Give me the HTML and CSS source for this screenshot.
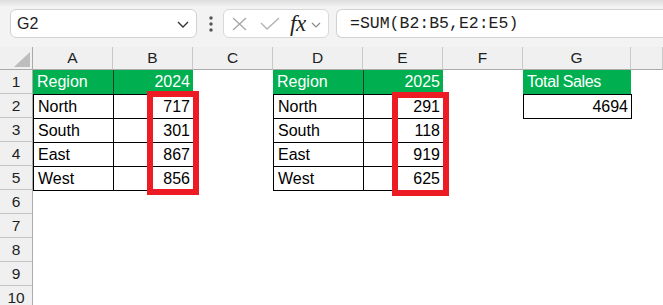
FILE: index.html
```html
<!DOCTYPE html>
<html lang="en">
<head>
    <meta charset="UTF-8">
    <meta name="viewport" content="width=device-width, initial-scale=1.0">
    <title>Total Sales</title>
    <link rel="stylesheet" href="styles.css">
</head>
<body>
    <div class="toolbar">
        <div class="namebox">
            <span>G2</span>
            <svg class="chev" width="12" height="7" viewBox="0 0 12 7"><path d="M1 1 L6 6 L11 1" fill="none" stroke="#333" stroke-width="1.4"/></svg>
        </div>
        <svg class="grip" width="6" height="16" viewBox="0 0 6 16">
            <circle cx="3" cy="2" r="1.7" fill="#555"/>
            <circle cx="3" cy="8" r="1.7" fill="#555"/>
            <circle cx="3" cy="14" r="1.7" fill="#555"/>
        </svg>
        <div class="fxbox">
            <svg class="cancel" width="15" height="14" viewBox="0 0 15 14"><path d="M1 1 L14 13 M14 1 L1 13" fill="none" stroke="#a6a6a6" stroke-width="1.3"/></svg>
            <svg class="enter" width="20" height="13" viewBox="0 0 20 13"><path d="M1 6 L7 12 L19 1" fill="none" stroke="#b2b2b2" stroke-width="1.3"/></svg>
            <span class="fx">fx</span>
            <svg class="chev-sm" width="10" height="6" viewBox="0 0 10 6"><path d="M1 1 L5 5 L9 1" fill="none" stroke="#8a8a8a" stroke-width="1.2"/></svg>
        </div>
        <div class="formula">=SUM(B2:B5,E2:E5)</div>
    </div>

    <div class="sheet">
        <div class="row colhead">
            <div class="corner"><svg width="16" height="15" viewBox="0 0 16 15"><path d="M16 0 L16 15 L0 15 Z" fill="#bdbdbd"/></svg></div>
            <div>A</div><div>B</div><div>C</div><div>D</div><div>E</div><div>F</div><div>G</div><div></div>
        </div>

        <div class="row">
            <div class="num">1</div>
            <div class="cell head first">Region</div>
            <div class="cell head right">2024</div>
            <div class="cell"></div>
            <div class="cell head first">Region</div>
            <div class="cell head right">2025</div>
            <div class="cell"></div>
            <div class="cell head first narrow">Total Sales</div>
            <div class="cell"></div>
        </div>
        <div class="row">
            <div class="num">2</div>
            <div class="cell t first">North</div>
            <div class="cell t last right">717</div>
            <div class="cell"></div>
            <div class="cell t first">North</div>
            <div class="cell t last right">291</div>
            <div class="cell"></div>
            <div class="cell t first last bottom right">4694</div>
            <div class="cell"></div>
        </div>
        <div class="row">
            <div class="num">3</div>
            <div class="cell t first">South</div>
            <div class="cell t last right">301</div>
            <div class="cell"></div>
            <div class="cell t first">South</div>
            <div class="cell t last right">118</div>
            <div class="cell"></div><div class="cell"></div><div class="cell"></div>
        </div>
        <div class="row">
            <div class="num">4</div>
            <div class="cell t first">East</div>
            <div class="cell t last right">867</div>
            <div class="cell"></div>
            <div class="cell t first">East</div>
            <div class="cell t last right">919</div>
            <div class="cell"></div><div class="cell"></div><div class="cell"></div>
        </div>
        <div class="row">
            <div class="num">5</div>
            <div class="cell t first bottom">West</div>
            <div class="cell t last bottom right">856</div>
            <div class="cell"></div>
            <div class="cell t first bottom">West</div>
            <div class="cell t last bottom right">625</div>
            <div class="cell"></div><div class="cell"></div><div class="cell"></div>
        </div>
        <div class="row"><div class="num">6</div></div>
        <div class="row"><div class="num">7</div></div>
        <div class="row"><div class="num">8</div></div>
        <div class="row"><div class="num">9</div></div>
        <div class="row"><div class="num">10</div></div>

        <!-- highlight boxes drawn over the sheet -->
        <div class="mark mark-b"></div>
        <div class="mark mark-e"></div>
    </div>
</body>
</html>
```

FILE: styles.css
```css
body {
    margin: 0;
    font-family: "Liberation Sans", Arial, sans-serif;
    background-color: #ffffff;
    overflow: hidden;
}
.toolbar {
    height: 47px;
    box-sizing: border-box;
    padding: 9px 0 0 10px;
    display: flex;
    align-items: flex-start;
    background: linear-gradient(#dedede, #f3f3f3 7px);
}
.namebox {
    width: 187px;
    height: 29px;
    box-sizing: border-box;
    background-color: white;
    border: 1px solid #d2d2d2;
    border-radius: 6px;
    display: flex;
    align-items: center;
    justify-content: space-between;
    padding: 0 7px 0 6px;
    font-size: 16px;
    color: #1e1e1e;
}
.namebox .chev {
    margin-top: 1px;
}
.grip {
    margin: 7px 0 0 11px;
}
.fxbox {
    width: 106px;
    height: 29px;
    box-sizing: border-box;
    margin-left: 9px;
    background-color: white;
    border: 1px solid #d8d8d8;
    border-radius: 6px;
    display: flex;
    align-items: center;
    padding-left: 8px;
}
.enter {
    margin-left: 13px;
}
.fx {
    margin-left: 10px;
    font-family: "Liberation Serif", "Times New Roman", serif;
    font-style: italic;
    font-size: 23px;
    color: #222;
    line-height: 1;
    letter-spacing: -0.5px;
}
.chev-sm {
    margin: 2px 0 0 5px;
}
.formula {
    flex: 1;
    height: 29px;
    box-sizing: border-box;
    margin-left: 7px;
    background-color: white;
    border: 1px solid #d2d2d2;
    border-right: none;
    border-radius: 6px 0 0 6px;
    padding-left: 13px;
    font-family: "Liberation Mono", "Courier New", monospace;
    font-size: 16.5px;
    line-height: 28px;
    color: #1e1e1e;
}
.sheet {
    position: relative;
}
.row {
    display: grid;
    grid-template-columns: 33px 80px 80px 80px 90px 80px 80px 108px 1fr;
    height: 24px;
}
.row > div {
    box-sizing: border-box;
    font-size: 16px;
    line-height: 23px;
    white-space: nowrap;
}
.colhead {
    height: 23px;
    background-color: #f0f0f0;
}
.colhead > div {
    border-right: 1px solid #c9c9c9;
    border-bottom: 1px solid #ababab;
    text-align: center;
    font-size: 15.5px;
    line-height: 22px;
    color: #1e1e1e;
}
.colhead .corner {
    display: flex;
    align-items: flex-end;
    justify-content: flex-end;
    padding: 0 2px 2px 0;
    border-right-color: #ababab;
}
.colhead .corner svg {
    display: block;
}
.num {
    background-color: #f0f0f0;
    border-right: 1px solid #ababab;
    border-bottom: 1px solid #c4c4c4;
    text-align: center;
    font-size: 15.5px !important;
    color: #1e1e1e;
}
.cell {
    padding: 0 3px 0 4px;
    color: #000;
}
.head {
    background-color: #00b050;
    color: #ffffff;
    border-left: 1px solid #1e3a28;
}
.head.first {
    border-left: none;
}
.narrow {
    letter-spacing: -0.4px;
}
.t {
    border-left: 1px solid #000;
    border-top: 1px solid #000;
}
.right {
    text-align: right;
}
.t.last {
    box-shadow: 1px 0 0 #000;
}
.t.bottom {
    box-shadow: 0 1px 0 #000;
}
.t.last.bottom {
    box-shadow: 1px 0 0 #000, 0 1px 0 #000, 1px 1px 0 #000;
}
.mark {
    position: absolute;
    box-sizing: border-box;
    border: 6px solid #ed1c24;
}
.mark-b {
    left: 147px;
    top: 44px;
    width: 52px;
    height: 104px;
}
.mark-e {
    left: 392px;
    top: 45px;
    width: 57px;
    height: 104px;
}
```
